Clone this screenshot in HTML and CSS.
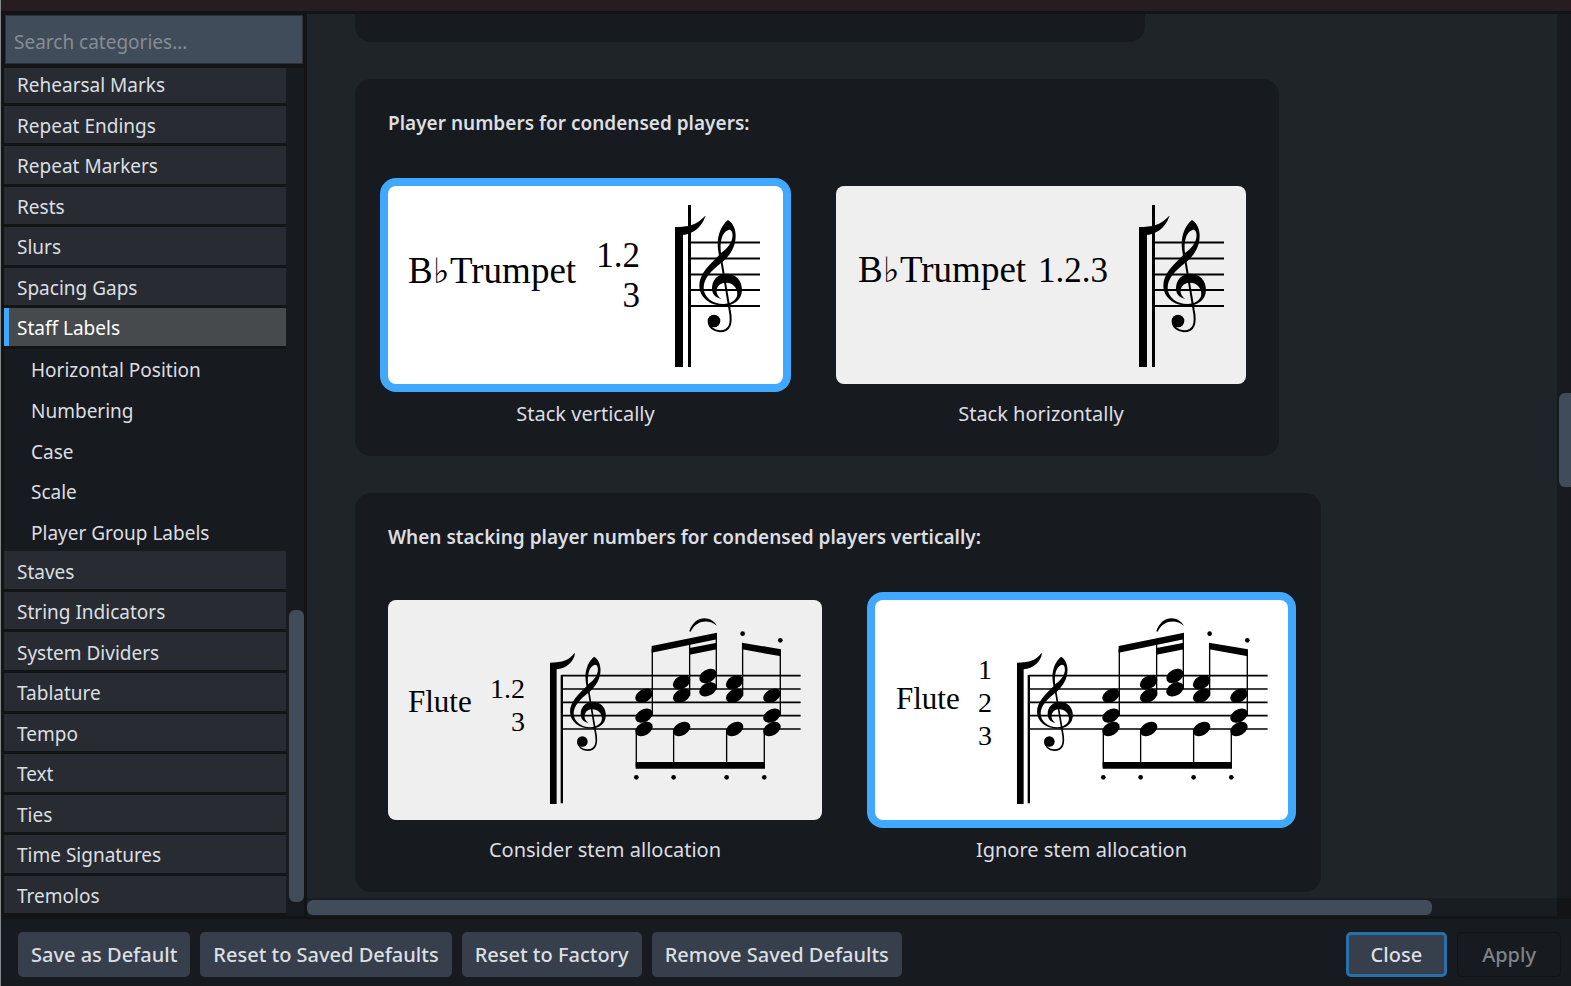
FILE: index.html
```
<!DOCTYPE html>
<html lang="en">
<head>
    <meta charset="UTF-8">
    <meta name="viewport" content="width=device-width, initial-scale=1.0">
    <title>Engraving Options</title>
    <link rel="stylesheet" href="styles.css">
</head>
<body>
    <!-- shared notation shapes -->
    <svg class="defs" aria-hidden="true">
        <defs>
            <g id="clef">
                <path fill-rule="evenodd" d="M204 75C185 90 174 116 173 145C173 160 175 170 177 181C148 210 118 236 118 272C118 306 150 332 190 332C222 332 246 314 246 284C246 256 226 236 200 236C172 236 156 256 156 280C156 298 166 308 184 312C173 304 169 295 170 285C173 270 184 263 198 263C217 263 232 277 232 297C231 315 213 327 190 327C158 327 131 306 131 278C131 252 152 228 186 202C210 182 227 155 227 122C227 102 219 84 204 75ZM183 174C179 146 184 110 207 104C216 104 219 115 217 128C213 148 199 162 183 174Z"/>
                <path d="M181 178L209 345C217 385 210 409 180 409C160 408 147 396 146 380" fill="none" stroke="#000" stroke-width="6"/>
                <circle cx="162" cy="378" r="19"/>
            </g>
            <g id="trumpet-staff">
                <path d="M287 41C300 41 309 39 317 30C318 30 317 31 317 31C313 43 303 48 295 49V181H287Z"/>
                <path d="M301.500 19V181" stroke="#000" stroke-width="3"/>
                <path d="M302 56.500H372M302 72.500H372M302 88.500H372M302 104H372M302 120H372" stroke="#000" stroke-width="2"/>
                <use href="#clef" transform="translate(272 9) scale(.3333)"/>
            </g>
            <g id="flute-staff">
                <path d="M510 218C548 218 568 210 583 190H585C582 216 558 236 530 238V642H510Z"/>
                <path d="M545.500 255V640" stroke="#000" stroke-width="7"/>
                <path d="M545 257H1262M545 297H1262M545 337H1262M545 377H1262M545 417H1262" stroke="#000" stroke-width="5"/>
                <use href="#clef" transform="translate(471 137) scale(.84)"/>
                <path d="M817 176V377M929 158V317M1009 136V298M1088 166V317M1201 186V377M769 417V530M881 417V530M1040 417V530M1153 417V530" stroke="#000" stroke-width="4"/>
                <path d="M815 168L1011 128V148L815 188ZM929 174L1011 158V178L929 194ZM1086 158L1203 178V199L1086 178ZM767 516H1155V536H767Z"/>
                <path d="M928 124C944 74 993 76 1011 107C988 88 950 88 932 125Z"/>
                <g id="heads">
                    <ellipse cx="792" cy="317" rx="28" ry="19" transform="rotate(-30 792 317)"/>
                    <ellipse cx="792" cy="377" rx="28" ry="19" transform="rotate(-30 792 377)"/>
                    <ellipse cx="792" cy="417" rx="28" ry="19" transform="rotate(-30 792 417)"/>
                    <ellipse cx="905" cy="277" rx="28" ry="19" transform="rotate(-30 905 277)"/>
                    <ellipse cx="905" cy="317" rx="28" ry="19" transform="rotate(-30 905 317)"/>
                    <ellipse cx="905" cy="417" rx="28" ry="19" transform="rotate(-30 905 417)"/>
                    <ellipse cx="984" cy="258" rx="28" ry="19" transform="rotate(-30 984 258)"/>
                    <ellipse cx="984" cy="298" rx="28" ry="19" transform="rotate(-30 984 298)"/>
                    <ellipse cx="1064" cy="277" rx="28" ry="19" transform="rotate(-30 1064 277)"/>
                    <ellipse cx="1064" cy="317" rx="28" ry="19" transform="rotate(-30 1064 317)"/>
                    <ellipse cx="1064" cy="417" rx="28" ry="19" transform="rotate(-30 1064 417)"/>
                    <ellipse cx="1176" cy="317" rx="28" ry="19" transform="rotate(-30 1176 317)"/>
                    <ellipse cx="1176" cy="377" rx="28" ry="19" transform="rotate(-30 1176 377)"/>
                    <ellipse cx="1176" cy="417" rx="28" ry="19" transform="rotate(-30 1176 417)"/>
                </g>
                <circle cx="1088" cy="131" r="7"/>
                <circle cx="1201" cy="151" r="7"/>
                <circle cx="769" cy="562" r="7"/>
                <circle cx="881" cy="562" r="7"/>
                <circle cx="1040" cy="562" r="7"/>
                <circle cx="1153" cy="562" r="7"/>
            </g>
        </defs>
    </svg>

    <div class="titlebar"></div>

    <div class="workspace">
        <nav class="sidebar" aria-label="Categories">
            <input class="search" type="text" placeholder="Search categories..." aria-label="Search categories">
            <div class="category-area">
                <ul class="categories">
                    <li><a href="#">Rehearsal Marks</a></li>
                    <li><a href="#">Repeat Endings</a></li>
                    <li><a href="#">Repeat Markers</a></li>
                    <li><a href="#">Rests</a></li>
                    <li><a href="#">Slurs</a></li>
                    <li><a href="#">Spacing Gaps</a></li>
                    <li class="selected"><a href="#">Staff Labels</a></li>
                    <li class="sub"><a href="#">Horizontal Position</a></li>
                    <li class="sub"><a href="#">Numbering</a></li>
                    <li class="sub"><a href="#">Case</a></li>
                    <li class="sub"><a href="#">Scale</a></li>
                    <li class="sub"><a href="#">Player Group Labels</a></li>
                    <li><a href="#">Staves</a></li>
                    <li><a href="#">String Indicators</a></li>
                    <li><a href="#">System Dividers</a></li>
                    <li><a href="#">Tablature</a></li>
                    <li><a href="#">Tempo</a></li>
                    <li><a href="#">Text</a></li>
                    <li><a href="#">Ties</a></li>
                    <li><a href="#">Time Signatures</a></li>
                    <li><a href="#">Tremolos</a></li>
                </ul>
                <div class="side-track"><div class="side-thumb"></div></div>
            </div>
        </nav>

        <main class="main">
            <div class="options">
                <section class="panel panel-cut"></section>

                <section class="panel">
                    <h2 id="numbers-title">Player numbers for condensed players:</h2>
                    <div class="choices" role="radiogroup" aria-labelledby="numbers-title">
                        <label class="choice">
                            <input type="radio" name="numbers" checked>
                            <span class="card">
                                <svg width="395" height="198" viewBox="0 0 395 198">
                                    <text class="name-large" x="20" y="97">B</text>
                                    <text class="flat" x="45" y="97">♭</text>
                                    <text class="name-large" x="62" y="97">Trumpet</text>
                                    <text class="number-large" x="252" y="81" text-anchor="end">1.2</text>
                                    <text class="number-large" x="252" y="121" text-anchor="end">3</text>
                                    <use href="#trumpet-staff"/>
                                </svg>
                            </span>
                            <span class="caption">Stack vertically</span>
                        </label>
                        <label class="choice">
                            <input type="radio" name="numbers">
                            <span class="card">
                                <svg width="410" height="198" viewBox="0 0 410 198">
                                    <text class="name-large" x="22" y="96">B</text>
                                    <text class="flat" x="47" y="96">♭</text>
                                    <text class="name-large" x="64" y="96">Trumpet</text>
                                    <text class="number-large" x="272" y="96" text-anchor="end">1.2.3</text>
                                    <use href="#trumpet-staff" x="16"/>
                                </svg>
                            </span>
                            <span class="caption">Stack horizontally</span>
                        </label>
                    </div>
                </section>

                <section class="panel">
                    <h2 id="stems-title">When stacking player numbers for condensed players vertically:</h2>
                    <div class="choices" role="radiogroup" aria-labelledby="stems-title">
                        <label class="choice">
                            <input type="radio" name="stems">
                            <span class="card">
                                <svg width="434" height="220" viewBox="0 0 434 220">
                                    <text class="name-small" x="20" y="112">Flute</text>
                                    <text class="number-small" x="137" y="98" text-anchor="end">1.2</text>
                                    <text class="number-small" x="137" y="131" text-anchor="end">3</text>
                                    <use href="#flute-staff" transform="translate(-8 -10) scale(.3333)"/>
                                </svg>
                            </span>
                            <span class="caption">Consider stem allocation</span>
                        </label>
                        <label class="choice">
                            <input type="radio" name="stems" checked>
                            <span class="card">
                                <svg width="413" height="220" viewBox="0 0 413 220">
                                    <text class="name-small" x="21" y="109">Flute</text>
                                    <text class="number-small" x="110" y="79" text-anchor="middle">1</text>
                                    <text class="number-small" x="110" y="112" text-anchor="middle">2</text>
                                    <text class="number-small" x="110" y="145" text-anchor="middle">3</text>
                                    <use href="#flute-staff" transform="translate(-28 -10) scale(.3333)"/>
                                </svg>
                            </span>
                            <span class="caption">Ignore stem allocation</span>
                        </label>
                    </div>
                </section>
            </div>
            <div class="right-track"><div class="right-thumb"></div></div>
            <div class="bottom-track"><div class="bottom-thumb"></div></div>
        </main>
    </div>

    <footer class="footer">
        <button type="button" class="btn">Save as Default</button>
        <button type="button" class="btn">Reset to Saved Defaults</button>
        <button type="button" class="btn">Reset to Factory</button>
        <button type="button" class="btn">Remove Saved Defaults</button>
        <span class="spacer"></span>
        <button type="button" class="btn btn-close">Close</button>
        <button type="button" class="btn btn-apply" disabled>Apply</button>
    </footer>
</body>
</html>
```
FILE: styles.css
```
* {
    box-sizing: border-box;
}

body {
    margin: 0;
    height: 100vh;
    display: flex;
    flex-direction: column;
    overflow: hidden;
    background: #121416;
    color: #dcdfe2;
    font-family: "Noto Sans", "Open Sans", sans-serif;
    font-size: 19px;
    border-left: 1px solid #85888a;
}

.defs {
    position: absolute;
    width: 0;
    height: 0;
}

.titlebar {
    height: 11px;
    flex: none;
    background: #271c20;
}

.workspace {
    flex: 1;
    min-height: 0;
    display: flex;
    gap: 3px;
    padding-top: 3px;
}

/* category list */
.sidebar {
    width: 303px;
    flex: none;
    display: flex;
    flex-direction: column;
    padding-left: 3px;
}

.search {
    height: 49px;
    margin: 1px 1px 4px;
    padding: 4px 8px 0;
    border: 1px solid #2b3138;
    background: #404c59;
    color: #dcdfe2;
    font: inherit;
    flex: none;
}

.search::placeholder {
    color: #858c94;
    opacity: 1;
}

.category-area {
    flex: 1;
    min-height: 0;
    display: flex;
    overflow: hidden;
    background: #171a1e;
}

.categories {
    flex: 1;
    display: flex;
    flex-direction: column;
    margin: -3px 0 0;
    padding: 0;
    list-style: none;
}

.categories li {
    flex: 1;
    min-height: 0;
    display: flex;
    border-bottom: 3px solid #121416;
    background: #282c32;
}

.categories a {
    flex: 1;
    display: flex;
    align-items: center;
    padding: 3px 0 0 13px;
    color: inherit;
    line-height: 24px;
    text-decoration: none;
}

.categories .selected {
    background: #464a4d;
    color: #fff;
}

.categories .selected a {
    border-left: 5px solid #40a9ff;
    padding-left: 8px;
}

.categories .sub {
    background: #171a1e;
    border-color: #171a1e;
}

.categories .sub a {
    padding: 6px 0 0 27px;
}

.side-track {
    width: 18px;
    padding: 0 0 14px 3px;
    display: flex;
    align-items: flex-end;
}

.side-thumb {
    width: 15px;
    height: 35%;
    border-radius: 6px;
    background: #404c59;
}

/* option panels */
.main {
    flex: 1;
    min-width: 0;
    display: grid;
    grid-template-columns: 1fr 14px;
    grid-template-rows: 1fr 18px;
}

.options {
    min-height: 0;
    overflow: hidden;
    display: flex;
    flex-direction: column;
    align-items: flex-start;
    gap: 37px;
    padding-left: 48px;
    background: #1f2428;
}

.panel {
    flex: none;
    padding: 26px 33px 28px;
    border-radius: 16px;
    background: #171a1f;
}

.panel-cut {
    width: 790px;
    height: 28px;
    padding: 0;
    border-radius: 0 0 16px 16px;
}

.panel h2 {
    margin: 0 0 45px;
    font-size: 19px;
    line-height: 36px;
    font-weight: 600;
}

.choices {
    display: flex;
    gap: 53px;
}

.choice {
    display: flex;
    flex-direction: column;
    align-items: center;
}

.choice input {
    position: absolute;
    opacity: 0;
}

.card {
    display: block;
    border-radius: 8px;
    background: #efefef;
}

.card svg {
    display: block;
}

.choice input:checked + .card {
    background: #fff;
    box-shadow: 0 0 0 8px #40a9ff;
}

.caption {
    margin-top: 16px;
    font-size: 20px;
    line-height: 28px;
}

.name-large,
.name-small,
.number-large,
.number-small {
    font-family: "Liberation Serif", serif;
}

.name-large {
    font-size: 37px;
}

.number-large {
    font-size: 35px;
}

.name-small {
    font-size: 31px;
}

.number-small {
    font-size: 28px;
}

.flat {
    font-family: "DejaVu Sans", sans-serif;
    font-size: 35px;
}

.right-track {
    background: #171a1e;
    padding: 379px 0 0 2px;
}

.right-thumb {
    height: 94px;
    border-radius: 6px 0 0 6px;
    background: #404c59;
}

.bottom-track {
    background: #191c20;
    padding-top: 2px;
}

.bottom-thumb {
    width: 90%;
    height: 15px;
    border-radius: 6px;
    background: #404c59;
}

/* footer buttons */
.footer {
    flex: none;
    display: flex;
    gap: 10px;
    margin-top: 3px;
    padding: 13px 10px 9px 17px;
    background: #171a1f;
}

.btn {
    height: 45px;
    padding: 0 13px;
    border: 0;
    border-radius: 5px;
    background: #363f4b;
    color: #dcdfe2;
    font: inherit;
    font-size: 20px;
    font-weight: 500;
}

.spacer {
    flex: 1;
}

.btn-close {
    padding: 0 22px;
    border: 3px solid #2670ac;
}

.btn-apply {
    padding: 0 24px;
    border: 1px solid #121416;
    background: #171a1e;
    color: #7f8387;
}
```
